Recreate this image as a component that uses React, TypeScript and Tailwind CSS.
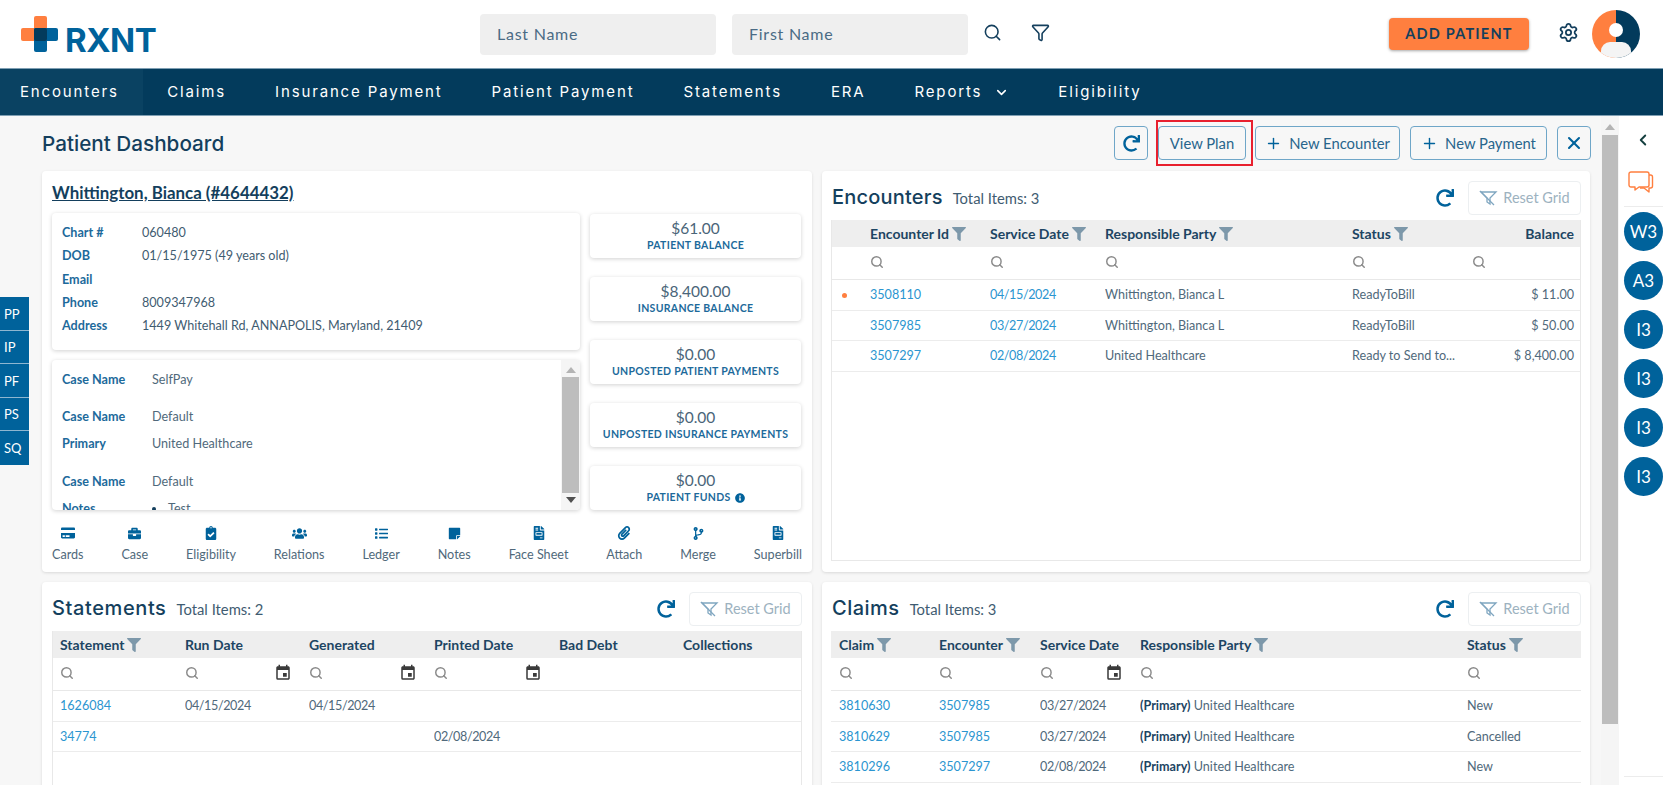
import type { ReactNode } from 'react';
import { ChevronDown, ChevronLeft, Funnel, Plus, Search, Settings, X } from 'lucide-react';
import {
  FaBriefcase,
  FaClipboardCheck,
  FaCodeBranch,
  FaCreditCard,
  FaFileInvoice,
  FaFilter,
  FaInfoCircle,
  FaList,
  FaPaperclip,
  FaRedo,
  FaStickyNote,
  FaUsers,
} from 'react-icons/fa';
import { MdEvent } from 'react-icons/md';

// =====================================================================================
// Static data
// =====================================================================================

const NAV_ITEMS = ['Encounters', 'Claims', 'Insurance Payment', 'Patient Payment', 'Statements', 'ERA', 'Reports', 'Eligibility'];

const SIDE_TABS = ['PP', 'IP', 'PF', 'PS', 'SQ'];

const QUEUE_BADGES = ['W3', 'A3', 'I3', 'I3', 'I3', 'I3'];

const BALANCES = [
  { amount: '$61.00', label: 'PATIENT BALANCE' },
  { amount: '$8,400.00', label: 'INSURANCE BALANCE' },
  { amount: '$0.00', label: 'UNPOSTED PATIENT PAYMENTS' },
  { amount: '$0.00', label: 'UNPOSTED INSURANCE PAYMENTS' },
  { amount: '$0.00', label: 'PATIENT FUNDS', info: true },
];

const ACTIONS = [
  { label: 'Cards', icon: <FaCreditCard size={14} /> },
  { label: 'Case', icon: <FaBriefcase size={13} /> },
  { label: 'Eligibility', icon: <FaClipboardCheck size={14} /> },
  { label: 'Relations', icon: <FaUsers size={15} /> },
  { label: 'Ledger', icon: <FaList size={13} /> },
  { label: 'Notes', icon: <FaStickyNote size={13} /> },
  { label: 'Face Sheet', icon: <FaFileInvoice size={14} /> },
  { label: 'Attach', icon: <FaPaperclip size={14} /> },
  { label: 'Merge', icon: <FaCodeBranch size={13} /> },
  { label: 'Superbill', icon: <FaFileInvoice size={14} /> },
];

interface Column {
  label: string;
  filter?: boolean;
  search?: boolean;
  calendar?: boolean;
  right?: boolean;
}

// =====================================================================================
// Small pieces
// =====================================================================================

function Logo() {
  return (
    <div className="flex w-[134px] items-center">
      <svg width="37" height="36" viewBox="0 0 37 36" className="shrink-0">
        <rect x="13" y="0" width="13" height="25" rx="2" fill="#ff7f3f" />
        <rect x="0" y="12" width="26" height="13" rx="2" fill="#ff7f3f" />
        <rect x="13" y="12" width="13" height="24" rx="2" fill="#00629b" />
        <rect x="13" y="12" width="24" height="13" rx="2" fill="#00629b" />
        <rect x="13" y="12" width="13" height="13" rx="2" fill="#033b5c" />
      </svg>
      <span className="mt-[12px] ml-[7px] font-['Inter',sans-serif] text-[33px] leading-none font-bold tracking-[-0.5px] text-[#00629b]">RXNT</span>
    </div>
  );
}

function Avatar() {
  return (
    <svg width="48" height="48" viewBox="0 0 48 48">
      <defs>
        <clipPath id="avatar-clip">
          <circle cx="24" cy="24" r="24" />
        </clipPath>
      </defs>
      <g clipPath="url(#avatar-clip)">
        <rect width="24" height="48" fill="#ff7f3f" />
        <rect x="24" width="24" height="48" fill="#033b5c" />
        <circle cx="24" cy="20" r="7" fill="#fff" />
        <rect x="9" y="32" width="30" height="20" rx="9" fill="#f4f4f4" />
      </g>
    </svg>
  );
}

function ChatIcon() {
  return (
    <svg width="26" height="24" viewBox="0 0 26 24" fill="none" stroke="#ff7f3f" strokeWidth="1.4" strokeLinejoin="round">
      <path d="M3 1h16a2 2 0 0 1 2 2v11a2 2 0 0 1-2 2H11l-4 3v-3H3a2 2 0 0 1-2-2V3a2 2 0 0 1 2-2z" />
      <path d="M21 4h1.5a2 2 0 0 1 2 2v9a2 2 0 0 1-2 2H21v4l-5-4h-4" />
    </svg>
  );
}

function ResetFunnel() {
  return (
    <svg width="19" height="16" viewBox="0 0 19 16" fill="none" stroke="#7fa6c0" strokeWidth="1.3" className="shrink-0">
      <path d="M2 2h15l-6 6v6l-3-2V8z" />
      <path d="M1 1l14 14" />
    </svg>
  );
}

function GridToolbar() {
  return (
    <div className="flex items-center">
      <FaRedo size={18} className="text-[#00629b]" />
      <div className="ml-[14px] flex h-[34px] w-[113px] items-center justify-center gap-[5px] rounded border border-[#eceff1] text-[14.5px] text-[#9db2c0]">
        <ResetFunnel />
        Reset Grid
      </div>
    </div>
  );
}

function OutlineButton({ className, children }: { className: string; children: ReactNode }) {
  return (
    <div className={`flex h-[34px] items-center justify-center rounded border border-[#6fa6c8] text-[14.8px] text-[#28658c] ${className}`}>
      {children}
    </div>
  );
}

function ScrollArrow({ up }: { up?: boolean }) {
  return (
    <svg width="10" height="6" viewBox="0 0 10 6" className="shrink-0">
      {up ? <path d="M5 0l5 6H0z" fill="#b4b4b4" /> : <path d="M0 0h10L5 6z" fill="#505050" />}
    </svg>
  );
}

function InfoRow({ label, children }: { label: string; children?: ReactNode }) {
  return (
    <div className="flex h-[23.2px] items-center text-[12.6px]">
      <span className="w-[80px] shrink-0 font-bold text-[#1d6a9b]">{label}</span>
      <span className="text-[#3f5c71]">{children}</span>
    </div>
  );
}

function CaseRow({ label, className, children }: { label: string; className?: string; children?: ReactNode }) {
  return (
    <div className={`flex h-[20px] items-center text-[12.6px] ${className ?? ''}`}>
      <span className="w-[90px] shrink-0 font-bold text-[#1d6a9b]">{label}</span>
      <span className="flex items-center text-[#50697b]">{children}</span>
    </div>
  );
}

function GridHeading({ title, total, titleClass }: { title: string; total: number; titleClass: string }) {
  return (
    <div className="flex items-baseline">
      <span className={`font-['Inter',sans-serif] text-[20px] font-medium text-[#143f5d] ${titleClass}`}>{title}</span>
      <span className="ml-[10px] text-[14.8px] text-[#3f5c71]">Total Items: {total}</span>
    </div>
  );
}

function DataGrid({ columns, gridClass, rows }: { columns: Column[]; gridClass: string; rows: ReactNode[][] }) {
  return (
    <div className="text-[12.6px] text-[#50697b]">
      <div className={`grid h-[27px] items-center bg-[#eeeeee] ${gridClass}`}>
        {columns.map((col, i) => (
          <div key={i} className={`flex items-center text-[14px] font-bold text-[#1d4563] ${col.right ? 'justify-end pr-[6px]' : ''}`}>
            {col.label}
            {col.filter && <FaFilter size={14} className="ml-[3px] text-[#7d98aa]" />}
          </div>
        ))}
      </div>
      <div className={`grid h-[33px] items-center border-b border-[#e8e8e8] pb-[2px] ${gridClass}`}>
        {columns.map((col, i) => (
          <div key={i} className="flex items-center justify-between pr-[17px]">
            {col.search ? <Search size={14} strokeWidth={2.5} className="text-[#8a8a8a]" /> : <span />}
            {col.calendar && <MdEvent size={18} className="text-[#3a3a3a]" />}
          </div>
        ))}
      </div>
      {rows.map((row, r) => (
        <div key={r} className={`grid h-[30.5px] items-center border-b border-[#ececec] pt-[2px] ${gridClass}`}>
          {row.map((cell, c) => (
            <div key={c} className={`truncate ${columns[c].right ? 'pr-[6px] text-right' : ''}`}>
              {cell}
            </div>
          ))}
        </div>
      ))}
    </div>
  );
}

function CellLink({ children }: { children: ReactNode }) {
  return <span className="text-[#2b95d0]">{children}</span>;
}

function DateText({ children }: { children: ReactNode }) {
  return <span className="tracking-[-0.4px]">{children}</span>;
}

const Primary = () => (
  <>
    <b className="font-bold text-[#1d4563]">(Primary)</b> United Healthcare
  </>
);

// =====================================================================================
// Cards
// =====================================================================================

function PatientCard() {
  return (
    <section className="flex h-[401px] flex-col rounded bg-white pt-[10px] shadow-[0_1px_3px_rgba(0,0,0,0.12)]">
      <a className="ml-[10px] h-[24px] text-[16.9px] leading-[24px] font-bold text-[#143f5d] underline">Whittington, Bianca (#4644432)</a>
      <div className="mt-[8px] flex gap-[10px] px-[10px]">
        <div className="flex w-[528px] flex-col gap-[10px]">
          <div className="h-[137px] rounded bg-white px-[10px] pt-[9px] shadow-[0_1px_4px_rgba(0,0,0,0.18)]">
            <InfoRow label="Chart #">060480</InfoRow>
            <InfoRow label="DOB">01/15/1975 (49 years old)</InfoRow>
            <InfoRow label="Email" />
            <InfoRow label="Phone">8009347968</InfoRow>
            <InfoRow label="Address">1449 Whitehall Rd, ANNAPOLIS, Maryland, 21409</InfoRow>
          </div>
          <div className="flex h-[150px] overflow-hidden rounded bg-white shadow-[0_1px_4px_rgba(0,0,0,0.18)]">
            <div className="flex-1 overflow-hidden pt-[10px] pl-[10px]">
              <CaseRow label="Case Name">SelfPay</CaseRow>
              <CaseRow label="Case Name" className="mt-[17.5px]">Default</CaseRow>
              <CaseRow label="Primary" className="mt-[7px]">United Healthcare</CaseRow>
              <CaseRow label="Case Name" className="mt-[17.5px]">Default</CaseRow>
              <CaseRow label="Notes" className="mt-[7px]">
                <span className="mr-[12px] h-[4px] w-[4px] rounded-full bg-[#143f5d]" />
                Test
              </CaseRow>
            </div>
            <div className="flex w-[19px] flex-col items-center justify-between bg-[#f5f5f5] py-[7px]">
              <ScrollArrow up />
              <div className="my-[4px] w-[17px] flex-1 bg-[#bdbdbd]" />
              <ScrollArrow />
            </div>
          </div>
        </div>
        <div className="flex w-[211px] flex-col gap-[19px] pt-[1px]">
          {BALANCES.map(b => (
            <div key={b.label} className="flex h-[44px] flex-col items-center justify-center rounded bg-white shadow-[0_1px_4px_rgba(0,0,0,0.18)]">
              <span className="text-[15.5px] leading-[19px] text-[#4a6579]">{b.amount}</span>
              <span className="flex items-center gap-[4px] text-[10.5px] leading-[15px] font-bold tracking-[0.3px] text-[#1d6a9b]">
                {b.label}
                {b.info && <FaInfoCircle size={10} className="text-[#00629b]" />}
              </span>
            </div>
          ))}
        </div>
      </div>
      <div className="flex flex-1 justify-between px-[10px] pt-[15px]">
        {ACTIONS.map(a => (
          <div key={a.label} className="flex flex-col items-center">
            <span className="flex h-[16px] items-center text-[#00629b]">{a.icon}</span>
            <span className="mt-[6px] text-[12.6px] leading-[16px] text-[#50697b]">{a.label}</span>
          </div>
        ))}
      </div>
    </section>
  );
}

function EncountersCard() {
  const columns: Column[] = [
    { label: '' },
    { label: 'Encounter Id', filter: true, search: true },
    { label: 'Service Date', filter: true, search: true },
    { label: 'Responsible Party', filter: true, search: true },
    { label: 'Status', filter: true, search: true },
    { label: 'Balance', search: true, right: true },
  ];
  const rows: ReactNode[][] = [
    [<span className="ml-[10px] block h-[5px] w-[5px] rounded-full bg-[#ff7f3f]" />, <CellLink>3508110</CellLink>, <CellLink><DateText>04/15/2024</DateText></CellLink>, 'Whittington, Bianca L', 'ReadyToBill', '$ 11.00'],
    ['', <CellLink>3507985</CellLink>, <CellLink><DateText>03/27/2024</DateText></CellLink>, 'Whittington, Bianca L', 'ReadyToBill', '$ 50.00'],
    ['', <CellLink>3507297</CellLink>, <CellLink><DateText>02/08/2024</DateText></CellLink>, 'United Healthcare', 'Ready to Send to...', '$ 8,400.00'],
  ];
  return (
    <section className="h-[401px] rounded bg-white px-[9px] pt-[10px] shadow-[0_1px_3px_rgba(0,0,0,0.12)]">
      <div className="flex h-[39px] items-start justify-between">
        <div className="pt-[1px] pl-[1px]">
          <GridHeading title="Encounters" total={3} titleClass="tracking-[0.2px]" />
        </div>
        <GridToolbar />
      </div>
      <div className="h-[341px] border-x border-b border-[#e8e8e8]">
        <DataGrid columns={columns} gridClass="grid-cols-[38px_120px_115px_247px_120px_1fr]" rows={rows} />
      </div>
    </section>
  );
}

function StatementsCard() {
  const columns: Column[] = [
    { label: 'Statement', filter: true, search: true },
    { label: 'Run Date', search: true, calendar: true },
    { label: 'Generated', search: true, calendar: true },
    { label: 'Printed Date', search: true, calendar: true },
    { label: 'Bad Debt' },
    { label: 'Collections' },
  ];
  const rows: ReactNode[][] = [
    [<CellLink>1626084</CellLink>, <DateText>04/15/2024</DateText>, <DateText>04/15/2024</DateText>, '', '', ''],
    [<CellLink>34774</CellLink>, '', '', <DateText>02/08/2024</DateText>, '', ''],
  ];
  return (
    <section className="h-[220px] rounded bg-white px-[10px] pt-[10px] shadow-[0_1px_3px_rgba(0,0,0,0.12)]">
      <div className="flex h-[39px] items-start justify-between">
        <div className="pt-[1px]">
          <GridHeading title="Statements" total={2} titleClass="tracking-[0.6px]" />
        </div>
        <GridToolbar />
      </div>
      <div className="h-[160px] border-x border-[#e8e8e8]">
        <DataGrid columns={columns} gridClass="grid-cols-[125px_124px_125px_125px_124px_1fr] pl-[7px]" rows={rows} />
      </div>
    </section>
  );
}

function ClaimsCard() {
  const columns: Column[] = [
    { label: 'Claim', filter: true, search: true },
    { label: 'Encounter', filter: true, search: true },
    { label: 'Service Date', search: true, calendar: true },
    { label: 'Responsible Party', filter: true, search: true },
    { label: 'Status', filter: true, search: true },
  ];
  const rows: ReactNode[][] = [
    [<CellLink>3810630</CellLink>, <CellLink>3507985</CellLink>, <DateText>03/27/2024</DateText>, <Primary />, 'New'],
    [<CellLink>3810629</CellLink>, <CellLink>3507985</CellLink>, <DateText>03/27/2024</DateText>, <Primary />, 'Cancelled'],
    [<CellLink>3810296</CellLink>, <CellLink>3507297</CellLink>, <DateText>02/08/2024</DateText>, <Primary />, 'New'],
  ];
  return (
    <section className="h-[220px] rounded bg-white px-[9px] pt-[10px] shadow-[0_1px_3px_rgba(0,0,0,0.12)]">
      <div className="flex h-[39px] items-start justify-between">
        <div className="pt-[1px] pl-[1px]">
          <GridHeading title="Claims" total={3} titleClass="tracking-[0.5px]" />
        </div>
        <GridToolbar />
      </div>
      <DataGrid columns={columns} gridClass="grid-cols-[100px_101px_100px_327px_1fr] pl-[8px]" rows={rows} />
    </section>
  );
}

// =====================================================================================
// App
// =====================================================================================

export default function App() {
  return (
    <div className="relative h-[785px] w-[1663px] overflow-hidden bg-white font-['Lato',sans-serif]">
      <header className="flex h-[68px] items-center pl-[21px]">
        <Logo />
        <div className="ml-[325px] flex h-[41px] w-[236px] items-center rounded bg-[#efefef] pl-[17px] text-[16px] tracking-[0.75px] text-[#4a6b85]">Last Name</div>
        <div className="ml-[16px] flex h-[41px] w-[236px] items-center rounded bg-[#efefef] pl-[17px] text-[16px] tracking-[0.75px] text-[#4a6b85]">First Name</div>
        <Search size={19} className="-mt-[4px] ml-[15px] text-[#143f5d]" />
        <Funnel size={19} className="-mt-[4px] ml-[29px] text-[#143f5d]" />
        <div className="ml-[339px] flex h-[32px] w-[140px] items-center justify-center rounded bg-[#ff7f3f] text-[14.5px] font-bold tracking-[1.2px] text-[#143f5d] shadow-[0_1px_3px_rgba(0,0,0,0.35)]">ADD PATIENT</div>
        <Settings size={21} className="-mt-[4px] ml-[29px] text-[#143f5d]" />
        <div className="ml-[13px]">
          <Avatar />
        </div>
      </header>

      <nav className="flex h-[48px] border-y border-[#7f9fb3] bg-[#033b5c] font-['Inter',sans-serif] text-[15px] tracking-[1.85px] text-white">
        {NAV_ITEMS.map((item, i) => (
          <div key={item} className={`flex items-center pt-[1px] ${i === 0 ? 'bg-[#0a4262] pr-[24px] pl-[20px]' : 'px-[24.5px]'}`}>
            {item}
            {item === 'Reports' && <ChevronDown size={15} strokeWidth={2.5} className="ml-[12px]" />}
          </div>
        ))}
      </nav>

      <main className="flex h-[669px]">
        <div className="w-[1602px] bg-[#f7f7f7] pr-[10px] pl-[42px]">
          <div className="flex h-[55px] items-start justify-between pt-[10px]">
            <h1 className="pt-[2px] font-['Inter',sans-serif] text-[20.7px] font-medium text-[#143f5d]">Patient Dashboard</h1>
            <div className="flex text-[#28658c]">
              <OutlineButton className="w-[34px] text-[#00629b]">
                <FaRedo size={17} className="text-[#00629b]" />
              </OutlineButton>
              <div className="relative ml-[10px]">
                <OutlineButton className="w-[88px]">View Plan</OutlineButton>
                <div className="absolute -top-[6px] -left-[2px] h-[46px] w-[97px] border-2 border-[#e8202e]" />
              </div>
              <OutlineButton className="ml-[9px] w-[145px] gap-[7px]">
                <Plus size={17} className="text-[#00629b]" />
                New Encounter
              </OutlineButton>
              <OutlineButton className="ml-[10px] w-[137px] gap-[7px]">
                <Plus size={17} className="text-[#00629b]" />
                New Payment
              </OutlineButton>
              <OutlineButton className="ml-[10px] w-[34px]">
                <X size={20} strokeWidth={2.5} className="text-[#00629b]" />
              </OutlineButton>
            </div>
          </div>
          <div className="grid grid-cols-[770px_768px] gap-x-[10px] gap-y-[10px]">
            <PatientCard />
            <EncountersCard />
            <StatementsCard />
            <ClaimsCard />
          </div>
        </div>

        <div className="flex w-[18px] flex-col items-center bg-[#f5f5f5] pt-[8px]">
          <ScrollArrow up />
          <div className="mt-[5px] h-[589px] w-[16px] bg-[#bdbdbd]" />
        </div>

        <aside className="flex-1 bg-white pl-[5px]">
          <div className="flex h-[48px] items-center justify-center pr-[2px]">
            <ChevronLeft size={18} strokeWidth={2.5} className="text-[#143f3f]" />
          </div>
          <div className="flex h-[43px] items-start justify-center border-b border-[#ececec] pt-[7px] pr-[5px]">
            <ChatIcon />
          </div>
          <div className="mt-[5px] flex flex-col gap-[10px]">
            {QUEUE_BADGES.map((badge, i) => (
              <div key={i} className="flex h-[39px] w-[39px] items-center justify-center rounded-full bg-[#00629b] text-[17px] text-white">
                {badge}
              </div>
            ))}
          </div>
          <div className="mt-[280px] border-t border-[#ececec]" />
        </aside>
      </main>

      <div className="absolute top-[297px] left-0 flex w-[29px] flex-col">
        {SIDE_TABS.map(tab => (
          <div key={tab} className="flex h-[33.6px] items-center border-b border-[#8fb6d0] bg-[#00629b] pt-[2px] pl-[4px] text-[13px] text-white last:border-b-0">
            {tab}
          </div>
        ))}
      </div>
    </div>
  );
}
